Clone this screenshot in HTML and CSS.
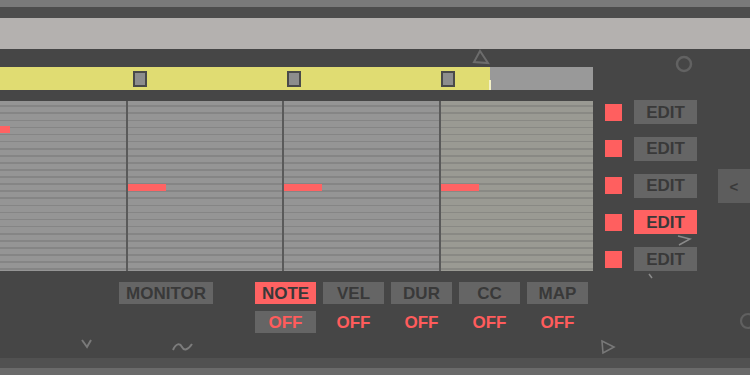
FILE: index.html
```html
<!DOCTYPE html>
<html>
<head>
<meta charset="utf-8">
<link rel="stylesheet" href="styles.css">
</head>
<body>
<div class="strip-top"></div>
<div class="strip-dark"></div>
<div class="header"></div>
<div class="main">
  <div class="left">
    <div class="bar">
      <div class="bar-fill" style="width:490px">
        <div class="cell"></div>
        <div class="cell"><div class="handle"></div></div>
        <div class="cell"><div class="handle"></div></div>
        <div class="cell"><div class="handle"></div></div>
      </div>
    </div>
    <div class="roll">
      <div class="col col1"><div class="note" style="left:0;top:25px;width:10px"></div></div>
      <div class="col col2"><div class="note" style="left:0;top:83px;width:38px"></div></div>
      <div class="col col3"><div class="note" style="left:0;top:83px;width:38px"></div></div>
      <div class="col col4"><div class="note" style="left:0;top:83px;width:38px"></div></div>
    </div>
    <div class="controls">
      <div class="btn monitor">MONITOR</div>
      <div class="matrix">
        <div class="btn on">NOTE</div>
        <div class="btn">VEL</div>
        <div class="btn">DUR</div>
        <div class="btn">CC</div>
        <div class="btn">MAP</div>
        <div class="btn off boxed">OFF</div>
        <div class="btn off">OFF</div>
        <div class="btn off">OFF</div>
        <div class="btn off">OFF</div>
        <div class="btn off">OFF</div>
      </div>
    </div>
  </div>
  <div class="right">
    <div class="edits">
      <div class="edit-row"><div class="sq"></div><div class="btn edit">EDIT</div></div>
      <div class="edit-row"><div class="sq"></div><div class="btn edit">EDIT</div></div>
      <div class="edit-row"><div class="sq"></div><div class="btn edit">EDIT</div></div>
      <div class="edit-row"><div class="sq"></div><div class="btn edit on">EDIT</div></div>
      <div class="edit-row"><div class="sq"></div><div class="btn edit">EDIT</div></div>
    </div>
    <div class="btn back">&lt;</div>
  </div>

  <svg class="deco tri-top" width="20" height="16" viewBox="0 0 20 16"><path d="M9 2 L3 13 L17 14 Z" fill="none" stroke="#6c6c6c" stroke-width="2"/></svg>
  <svg class="deco circ-top" width="20" height="20" viewBox="0 0 20 20"><circle cx="10" cy="10" r="7" fill="none" stroke="#626262" stroke-width="2.5"/></svg>
  <svg class="deco tri-small" width="16" height="12" viewBox="0 0 16 12"><path d="M2 1 L14 4 L3 10" fill="none" stroke="#8a8a8a" stroke-width="1.5"/></svg>
  <svg class="deco tick" width="6" height="6" viewBox="0 0 6 6"><path d="M1 1 L4 5" stroke="#8a8a8a" stroke-width="1.5"/></svg>
  <svg class="deco vee" width="12" height="10" viewBox="0 0 12 10"><path d="M1 1 L6 8 L10 1" fill="none" stroke="#7a7a7a" stroke-width="2"/></svg>
  <svg class="deco wave" width="22" height="12" viewBox="0 0 22 12"><path d="M1 9 C4 2 8 2 10 6 C12 10 16 9 20 3" fill="none" stroke="#7c7c7c" stroke-width="2"/></svg>
  <svg class="deco play" width="16" height="16" viewBox="0 0 16 16"><path d="M2 2 L14 8 L3 14 Z" fill="none" stroke="#787878" stroke-width="1.6"/></svg>
  <svg class="deco circ-bot" width="20" height="20" viewBox="0 0 20 20"><circle cx="9" cy="9" r="7" fill="none" stroke="#606060" stroke-width="2.2"/></svg>
</div>
<div class="foot-dark"></div>
<div class="foot-light"></div>
</body>
</html>
```
FILE: styles.css
```css
html, body {
  margin: 0;
  padding: 0;
}
body {
  width: 750px;
  height: 375px;
  overflow: hidden;
  background: #464646;
  font-family: "Liberation Sans", Arial, sans-serif;
}
.strip-top { height: 7px; background: #7a7a7a; }
.strip-dark { height: 11px; background: #4d4d4d; }
.header { height: 31px; background: #b4b1af; }
.main {
  position: relative;
  height: 309px;
  display: flex;
}
.left {
  width: 593px;
  flex: none;
  padding-top: 18px;
  box-sizing: border-box;
}
.bar {
  height: 23px;
  background: #999999;
  display: flex;
}
.bar-fill {
  position: relative;
  height: 23px;
  background: #e0dc72;
  display: grid;
  grid-template-columns: 127px 154px 154px 1fr;
  align-items: center;
}
.bar-fill::after {
  content: "";
  position: absolute;
  right: -1px;
  bottom: 0;
  width: 2px;
  height: 10px;
  background: #f3f1c6;
}
.cell { display: flex; align-items: center; }
.handle {
  width: 10px;
  height: 12px;
  margin-left: 6px;
  background: #8d8d8d;
  border: 2px solid #4a4a4a;
}
.roll {
  margin-top: 11px;
  height: 170px;
  display: flex;
  background-color: #959595;
  background-image: repeating-linear-gradient(to bottom, #959595 0, #959595 5.4px, #858585 5.4px, #858585 7.08px);
  background-position: 0 -1px;
}
.col { position: relative; height: 170px; }
.col1 { width: 126px; }
.col2 { width: 154px; border-left: 2px solid #5a5a5a; }
.col3 { width: 155px; border-left: 2px solid #5a5a5a; }
.col4 {
  flex: 1;
  border-left: 2px solid #5a5a5a;
  background-image: repeating-linear-gradient(to bottom, #9a9a93 0, #9a9a93 5.4px, #898984 5.4px, #898984 7.08px);
  background-position: 0 -1px;
}
.note {
  position: absolute;
  height: 7px;
  background: #ff6363;
}
.controls {
  display: flex;
  align-items: flex-start;
  padding-left: 119px;
  margin-top: 11px;
}
.btn {
  height: 22px;
  background: #656565;
  color: #393939;
  font-weight: bold;
  font-size: 17px;
  line-height: 1;
  display: flex;
  align-items: center;
  justify-content: center;
  box-sizing: border-box;
}
.monitor { width: 94px; }
.matrix {
  margin-left: 42px;
  display: grid;
  grid-template-columns: repeat(5, 61px);
  column-gap: 7px;
  row-gap: 7px;
}
.btn.on { background: #ff6262; }
.btn.off { background: transparent; color: #ff5c5c; }
.btn.off.boxed { background: #656565; }
.right {
  flex: 1;
  display: flex;
  align-items: flex-start;
}
.edits {
  padding: 51px 0 0 12px;
  display: flex;
  flex-direction: column;
  gap: 12.75px;
}
.edit-row {
  height: 24px;
  display: flex;
  align-items: center;
  gap: 12px;
}
.sq {
  width: 17px;
  height: 17px;
  background: #ff5f5f;
}
.edit { width: 63px; height: 24px; }
.back {
  margin: 120px 0 0 21px;
  width: 32px;
  height: 34px;
  background: #5d5d5d;
  font-size: 15px;
}
.deco { position: absolute; display: block; }
.tri-top { left: 471px; top: 0; }
.circ-top { left: 674px; top: 5px; }
.tri-small { left: 676px; top: 186px; }
.tick { left: 648px; top: 224px; }
.vee { left: 81px; top: 290px; }
.wave { left: 172px; top: 292px; }
.play { left: 600px; top: 290px; }
.circ-bot { left: 739px; top: 263px; }
.foot-dark { height: 10px; background: #515151; }
.foot-light { height: 7px; background: #6a6a6a; }
```
